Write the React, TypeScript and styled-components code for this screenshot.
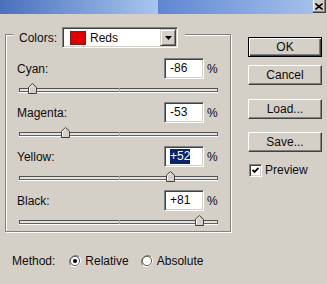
import React from "react";
import styled, { createGlobalStyle } from "styled-components";

const GlobalStyle = createGlobalStyle`
  html, body {
    margin: 0;
    padding: 0;
    background: #d4d0c8;
  }
  body {
    font-family: "Liberation Sans", Arial, sans-serif;
    font-size: 12px;
    color: #0c0c0c;
  }
`;

const Window = styled.div`
  width: 327px;
  height: 284px;
  overflow: hidden;
  background: #d4d0c8;
  display: flex;
  flex-direction: column;
`;

const TitleBar = styled.div`
  display: flex;
  height: 14px;
  flex-shrink: 0;
`;

const TitleSegment = styled.div<{ $from: string; $to: string; $width?: number }>`
  ${p => (p.$width ? `width: ${p.$width}px;` : "flex: 1;")}
  background: linear-gradient(to right, ${p => p.$from}, ${p => p.$to});
`;

const CloseBox = styled.div`
  width: 13px;
  height: 13px;
  margin-right: 1px;
  box-sizing: border-box;
  background: #d4d0c8;
  border-right: 1px solid #404040;
  border-bottom: 1px solid #404040;
  box-shadow: inset -1px -1px #808080, inset 1px 0 #fff;
  display: flex;
  align-items: center;
  justify-content: center;
`;

const Body = styled.div`
  display: flex;
  padding: 0 5px;
`;

const LeftColumn = styled.div`
  width: 226px;
  margin-top: 20px;
  display: flex;
  flex-direction: column;
`;

const GroupBox = styled.div`
  position: relative;
  border: 1px solid #808080;
  box-shadow: 1px 1px 0 #fff, inset 1px 1px 0 #fff;
  padding: 23px 11px 2px 11px;
  display: flex;
  flex-direction: column;
  gap: 5px;
`;

const Legend = styled.div`
  position: absolute;
  top: -8px;
  left: 7px;
  height: 21px;
  padding: 0 7px 0 6px;
  background: #d4d0c8;
  display: flex;
  align-items: center;
  gap: 5px;
`;

const Dropdown = styled.div`
  width: 116px;
  height: 21px;
  box-sizing: border-box;
  background: #fff;
  border: 1px solid;
  border-color: #808080 #fff #fff #808080;
  box-shadow: inset 1px 1px #404040, inset -1px -1px #d4d0c8;
  display: flex;
  align-items: center;
  padding: 0 1px 0 7px;
`;

const Swatch = styled.div<{ $color: string }>`
  width: 16px;
  height: 14px;
  box-sizing: border-box;
  background: ${p => p.$color};
  border: 1px solid #7a2020;
`;

const DropdownText = styled.span`
  flex: 1;
  margin-left: 4px;
`;

const ArrowButton = styled.div`
  width: 16px;
  height: 17px;
  box-sizing: border-box;
  background: #d4d0c8;
  border: 1px solid;
  border-color: #d4d0c8 #404040 #404040 #d4d0c8;
  box-shadow: inset 1px 1px #fff, inset -1px -1px #808080;
  display: flex;
  align-items: center;
  justify-content: center;
`;

const Row = styled.div`
  display: flex;
  flex-direction: column;
`;

const RowHeader = styled.div`
  display: flex;
  align-items: center;
  height: 21px;
`;

const Label = styled.span`
  flex: 1;
`;

const ValueBox = styled.div`
  width: 40px;
  height: 21px;
  box-sizing: border-box;
  background: #fff;
  border: 1px solid;
  border-color: #808080 #fff #fff #808080;
  box-shadow: inset 1px 1px #404040, inset -1px -1px #d4d0c8;
  display: flex;
  align-items: center;
  padding-left: 5px;
`;

const Selected = styled.span<{ $on: boolean }>`
  background: ${p => (p.$on ? "#0a246a" : "transparent")};
  color: ${p => (p.$on ? "#fff" : "inherit")};
  padding: 1px 0;
  line-height: 13px;
`;

const Percent = styled.span`
  width: 12px;
  margin-left: 3px;
`;

const SliderArea = styled.div`
  position: relative;
  height: 18px;
  padding-top: 9px;
  margin: 0 1px 0 2px;
  box-sizing: border-box;
`;

const Track = styled.div`
  position: relative;
  height: 4px;
  box-sizing: border-box;
  border: 1px solid;
  border-color: #505050 #606060 #606060 #505050;
  background: #e4e2dc;
  box-shadow: 0 1px #fff;
`;

const Tick = styled.div`
  position: absolute;
  left: 50%;
  top: -1px;
  width: 1px;
  height: 4px;
  background: #a8a8a8;
`;

const Thumb = styled.svg`
  position: absolute;
  top: 4px;
`;

const MethodRow = styled.div`
  display: flex;
  align-items: center;
  height: 16px;
  margin-top: 21px;
  padding-left: 7px;
`;

const MethodLabel = styled.span`
  margin-right: 14px;
`;

const RadioOption = styled.label`
  display: flex;
  align-items: center;
  gap: 4px;
  margin-right: 12px;
`;

const RightColumn = styled.div`
  width: 74px;
  margin-left: 17px;
  margin-top: 23px;
  display: flex;
  flex-direction: column;
`;

const Button = styled.div<{ $default?: boolean; $gap: number }>`
  height: 20px;
  margin-top: ${p => p.$gap}px;
  box-sizing: border-box;
  background: #d4d0c8;
  border: 1px solid;
  border-color: ${p => (p.$default ? "#000" : "#fff #404040 #404040 #fff")};
  box-shadow: ${p =>
    p.$default
      ? "inset 1px 1px #fff, inset -1px -1px #404040, inset -2px -2px #808080"
      : "inset -1px -1px #808080"};
  display: flex;
  align-items: center;
  justify-content: center;
`;

const CheckRow = styled.label`
  display: flex;
  align-items: center;
  gap: 3px;
  margin-top: 11px;
  margin-left: 1px;
`;

const CheckBox = styled.div`
  width: 13px;
  height: 13px;
  box-sizing: border-box;
  background: #fff;
  border: 1px solid;
  border-color: #808080 #fff #fff #808080;
  box-shadow: inset 1px 1px #404040, inset -1px -1px #d4d0c8;
  display: flex;
  align-items: center;
  justify-content: center;
`;

const channels = [
  { name: "Cyan:", value: -86 },
  { name: "Magenta:", value: -53 },
  { name: "Yellow:", value: 52, selected: true },
  { name: "Black:", value: 81 },
];

const fmt = (v: number) => (v > 0 ? `+${v}` : `${v}`);

function Radio({ checked }: { checked: boolean }) {
  return (
    <svg width="12" height="12" viewBox="0 0 12 12">
      <path d="M10.2 1.8 A6 6 0 0 0 1.8 10.2" fill="none" stroke="#808080" strokeWidth="1" />
      <path d="M1.8 10.2 A6 6 0 0 0 10.2 1.8" fill="none" stroke="#fff" strokeWidth="1" />
      <circle cx="6" cy="6" r="4.6" fill="#fff" stroke="#404040" strokeWidth="0.8" />
      {checked && <circle cx="6" cy="6" r="2" fill="#000" />}
    </svg>
  );
}

function App() {
  return (
    <>
      <GlobalStyle />
      <Window>
        <TitleBar>
          <TitleSegment $from="#4a70bd" $to="#a8c6ee" $width={158} />
          <TitleSegment $from="#5f86d2" $to="#a4c0ea" />
          <CloseBox>
            <svg width="8" height="7" viewBox="0 0 8 7">
              <path d="M0.5 0.5 L7.5 6.5 M7.5 0.5 L0.5 6.5" stroke="#000" strokeWidth="1.6" />
            </svg>
          </CloseBox>
        </TitleBar>
        <Body>
          <LeftColumn>
            <GroupBox>
              <Legend>
                <span>Colors:</span>
                <Dropdown>
                  <Swatch $color="#e00000" />
                  <DropdownText>Reds</DropdownText>
                  <ArrowButton>
                    <svg width="7" height="4" viewBox="0 0 7 4">
                      <path d="M0 0 H7 L3.5 4 Z" fill="#000" />
                    </svg>
                  </ArrowButton>
                </Dropdown>
              </Legend>
              {channels.map(c => (
                <Row key={c.name}>
                  <RowHeader>
                    <Label>{c.name}</Label>
                    <ValueBox>
                      <Selected $on={!!c.selected}>{fmt(c.value)}</Selected>
                    </ValueBox>
                    <Percent>%</Percent>
                  </RowHeader>
                  <SliderArea>
                    <Track>
                      <Tick />
                    </Track>
                    <Thumb
                      width="9"
                      height="11"
                      viewBox="0 0 9 11"
                      style={{ left: 95 + c.value }}
                    >
                      <path d="M0.5 10.5 V4.2 L4.5 0.5 L8.5 4.2 V10.5 Z" fill="#d4d0c8" stroke="#404040" />
                      <path d="M1.5 9.5 V4.6 L4.5 1.8" fill="none" stroke="#fff" />
                    </Thumb>
                  </SliderArea>
                </Row>
              ))}
            </GroupBox>
            <MethodRow>
              <MethodLabel>Method:</MethodLabel>
              <RadioOption>
                <Radio checked />
                <span>Relative</span>
              </RadioOption>
              <RadioOption>
                <Radio checked={false} />
                <span>Absolute</span>
              </RadioOption>
            </MethodRow>
          </LeftColumn>
          <RightColumn>
            <Button $default $gap={0}>OK</Button>
            <Button $gap={8}>Cancel</Button>
            <Button $gap={14}>Load...</Button>
            <Button $gap={13}>Save...</Button>
            <CheckRow>
              <CheckBox>
                <svg width="7" height="7" viewBox="0 0 7 7">
                  <path d="M0.5 3 L2.5 5 L6.5 1" fill="none" stroke="#000" strokeWidth="1.8" />
                </svg>
              </CheckBox>
              <span>Preview</span>
            </CheckRow>
          </RightColumn>
        </Body>
      </Window>
    </>
  );
}

export default App;
